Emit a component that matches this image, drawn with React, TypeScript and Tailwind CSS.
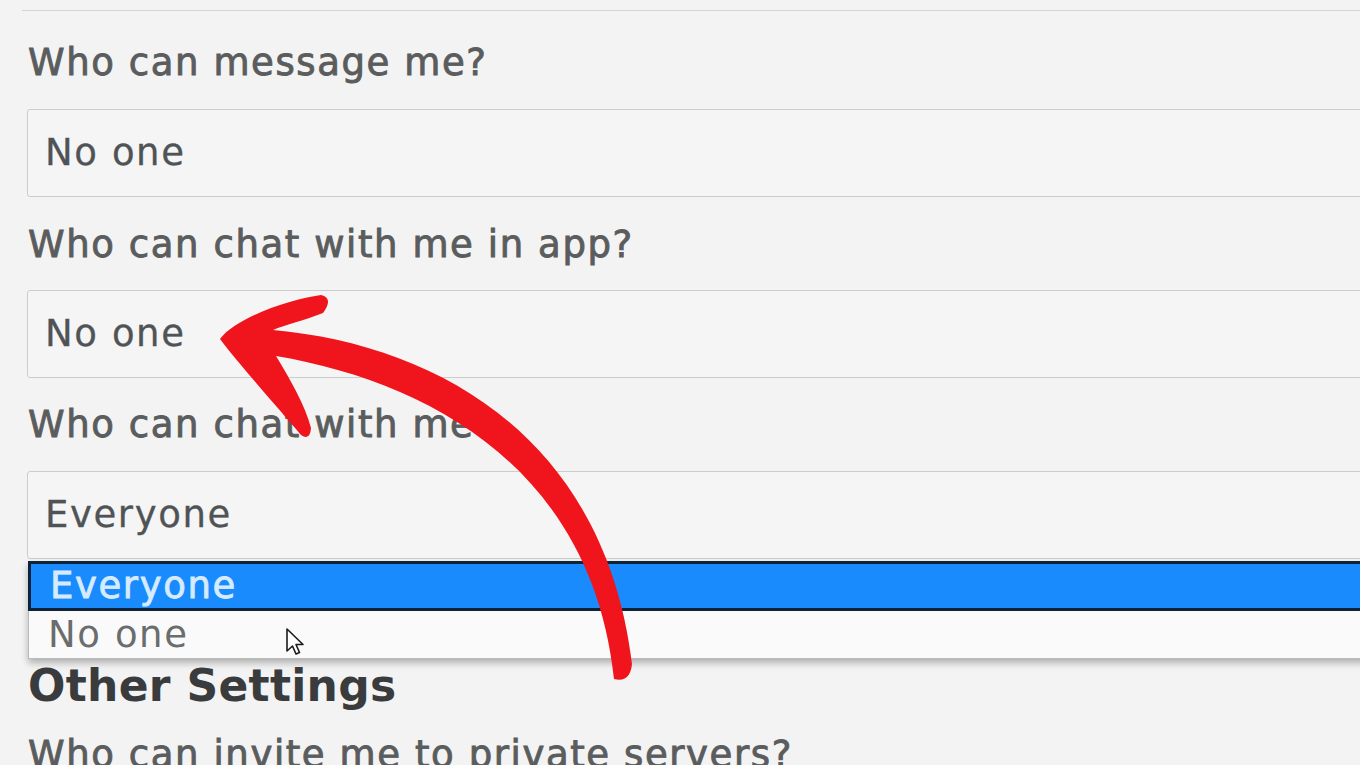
import React from "react";

const labelCls =
  "text-[37px] leading-[40px] tracking-[1.6px] text-[#5a5c5d] [-webkit-text-stroke:0.9px_#5a5c5d] whitespace-nowrap";
const valueCls =
  "text-[37px] leading-[40px] tracking-[1.6px] text-[#505355] [-webkit-text-stroke:0.3px_#505355] whitespace-nowrap";

const SelectBox = ({ value, className = "" }: { value: string; className?: string }) => (
  <div
    className={`flex items-center h-[88px] w-[1400px] -ml-px pl-[17px] border-[1.5px] border-[#cbcdcb] rounded-[3px] bg-[#f4f5f4] ${className}`}
  >
    <span className={valueCls}>{value}</span>
  </div>
);

const RedArrow = () => (
  <svg
    className="absolute left-0 top-0 pointer-events-none"
    width="1360"
    height="765"
    viewBox="0 0 1360 765"
  >
    <path
      fill="#f0141c"
      d="M 220 339
         C 235 318, 290 299, 321 295
         Q 334 298, 323 313
         C 305 320, 285 325, 273 330
         C 440 345, 605 440, 632 664
         Q 630 683, 614 679
         C 592 470, 430 382, 276 356
         C 291 381, 305 405, 311 428
         Q 310 441, 301 435
         C 280 410, 242 368, 220 339 Z"
    />
  </svg>
);

const Cursor = () => (
  <svg
    className="absolute left-[285px] top-[627px] pointer-events-none"
    width="26"
    height="34"
    viewBox="0 0 26 34"
  >
    <path
      d="M2 2 L2 24 L7.5 19 L11 27 L14.5 25.5 L11 17.5 L18 17.5 Z"
      fill="#ffffff"
      stroke="#1b1b1b"
      strokeWidth="1.6"
      strokeLinejoin="round"
    />
  </svg>
);

export default function App() {
  return (
    <div
      className="relative w-[1360px] h-[765px] overflow-hidden bg-[#f2f3f2]"
      style={{ fontFamily: '"DejaVu Sans", "Noto Sans", sans-serif' }}
    >
      <div className="pl-[28px]">
        {/* bottom edge of the previous select */}
        <div className="h-[11px] -ml-[6px] border-b-[1.5px] border-[#d3d5d3]" />

        <div className={`mt-[32px] ${labelCls}`}>Who can message me?</div>
        <SelectBox value="No one" className="mt-[26px]" />

        <div className={`mt-[28px] ${labelCls}`}>Who can chat with me in app?</div>
        <SelectBox value="No one" className="mt-[25px]" />

        <div className={`mt-[27px] ${labelCls}`}>Who can chat with me?</div>
        <SelectBox value="Everyone" className="mt-[26px]" />

        {/* open dropdown list */}
        <div className="mt-[2px] w-[1400px] shadow-[0_4px_7px_rgba(0,0,0,0.28)]">
          <div className="flex items-center h-[50px] pl-[19px] bg-[#1a8bfd] border-y-[3px] border-l-[3px] border-[#0c2339]">
            <span className="text-[37px] leading-[40px] tracking-[1.6px] text-[#d6ebff] [-webkit-text-stroke:0.8px_#d6ebff] whitespace-nowrap">
              Everyone
            </span>
          </div>
          <div className="flex items-center h-[48px] pl-[19px] bg-[#fafafa] border-l border-b border-[#b9bbb9]">
            <span className="text-[37px] leading-[40px] tracking-[1.6px] text-[#6a6c6d] whitespace-nowrap">
              No one
            </span>
          </div>
        </div>

        <div className="mt-[3px] text-[44px] leading-[48px] font-bold tracking-[0.3px] text-[#393b3d] whitespace-nowrap">
          Other Settings
        </div>

        <div className={`mt-[25px] ${labelCls}`}>Who can invite me to private servers?</div>
      </div>

      <Cursor />
      <RedArrow />
    </div>
  );
}
